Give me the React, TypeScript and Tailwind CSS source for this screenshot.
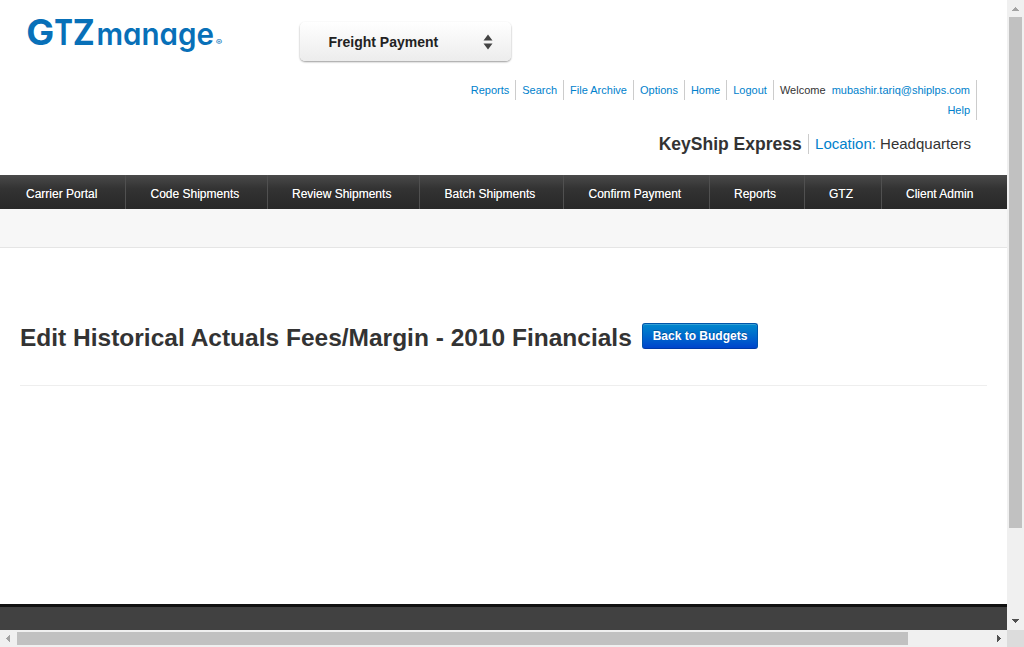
const topLinks = ['Reports', 'Search', 'File Archive', 'Options', 'Home', 'Logout'];

const navItems = [
  { label: 'Carrier Portal', width: 'w-[126px] pl-[26px]' },
  { label: 'Code Shipments', width: 'w-[142px] pl-[24.5px]' },
  { label: 'Review Shipments', width: 'w-[152px] pl-6' },
  { label: 'Batch Shipments', width: 'w-[144px] pl-[24.5px]' },
  { label: 'Confirm Payment', width: 'w-[146px] pl-[24.5px]' },
  { label: 'Reports', width: 'w-[95px] pl-6' },
  { label: 'GTZ', width: 'w-[77px] pl-6' },
  { label: 'Client Admin', width: 'w-[125px] pl-6' },
];

function Logo() {
  return (
    <svg width="200" height="60" viewBox="0 0 200 60" className="ml-[25px] shrink-0" fill="#0870b8">
      <text y="45.3" fontFamily="Inter, sans-serif" fontWeight="700" fontSize="35">
        <tspan x="1.2" textLength="28" lengthAdjust="spacingAndGlyphs">G</tspan>
        <tspan x="29.2" textLength="18.6" lengthAdjust="spacingAndGlyphs">T</tspan>
        <tspan x="47.8" textLength="22" lengthAdjust="spacingAndGlyphs">Z</tspan>
      </text>
      <text x="71.5" y="45.3" fontFamily="Inter, sans-serif" fontWeight="600" fontSize="31" textLength="117.5" lengthAdjust="spacingAndGlyphs" style={{ fontFeatureSettings: '"cv11"' }}>manage</text>
      <text x="190.7" y="45.3" fontFamily="Inter, sans-serif" fontSize="8" textLength="6.5" lengthAdjust="spacingAndGlyphs">®</text>
    </svg>
  );
}

function Header() {
  return (
    <header className="h-[175px]">
      <div className="flex h-20 items-start">
        <Logo />
        <button className="ml-[74.5px] mt-[22px] flex h-[39px] w-[211px] items-center justify-between rounded-[5px] bg-linear-to-b from-white to-[#ececec] pl-[29px] pr-[18px] text-sm font-bold text-[#222] shadow-[0_1px_2px_rgba(0,0,0,0.4)]">
          <span className="whitespace-nowrap">Freight Payment</span>
          <svg width="10" height="16" viewBox="0 0 10 16" fill="#444">
            <path d="M5 0.5L9.5 6.5H0.5Z M0.5 9.5H9.5L5 15.5Z" />
          </svg>
        </button>
      </div>
      <div className="flex items-start justify-end pr-[30px] text-[11px] leading-5 text-[#0081cc]">
        {topLinks.map((link) => (
          <a key={link} className="border-r border-[#ccc] px-1.5">{link}</a>
        ))}
        <div className="border-r border-[#ccc] px-1.5 text-right">
          <div><span className="text-[#333]">Welcome&nbsp;</span> <a>mubashir.tariq@shiplps.com</a></div>
          <a className="block">Help</a>
        </div>
      </div>
      <div className="mt-[14px] flex justify-end pr-9 leading-5 text-[#333]">
        <strong className="border-r border-[#ccc] pr-[6.4px] text-[17.5px]">KeyShip Express</strong>
        <span className="pl-1.5 text-[15px]"><a className="text-[#0081cc]">Location:</a> Headquarters</span>
      </div>
    </header>
  );
}

export default function App() {
  return (
    <div className="grid h-[647px] w-[1024px] grid-cols-[1007px_17px] grid-rows-[630px_17px] overflow-hidden bg-white font-['Liberation_Sans',Arial,sans-serif]">
      <div className="flex flex-col">
        <Header />
        <nav className="flex h-[34px] bg-[linear-gradient(#4a4a4a,#333_40%,#282828)] text-[12px] text-white [text-shadow:0_0_0.5px_rgba(255,255,255,0.6)]">
          {navItems.map((item) => (
            <a key={item.label} className={`flex items-center border-r border-[#505050] pt-1 whitespace-nowrap last:border-0 ${item.width}`}>
              {item.label}
            </a>
          ))}
        </nav>
        <div className="h-[39px] border-b border-[#e5e5e5] bg-[#f7f7f7]" />
        <main className="flex-1 px-5 pt-[70px]">
          <div className="flex h-[68px] items-start border-b border-[#eee]">
            <h1 className="w-[612px] text-[24.5px] leading-10 font-bold whitespace-nowrap text-[#333]">Edit Historical Actuals Fees/Margin - 2010 Financials</h1>
            <button className="ml-[10px] mt-[5px] h-[26px] w-[116px] rounded-[3px] border border-[#0055aa] border-b-[#0039a6] bg-linear-to-b from-[#0088cc] to-[#0044cc] text-[12px] leading-6 font-bold text-white shadow-[inset_0_1px_0_rgba(255,255,255,0.2)] [text-shadow:0_-1px_0_rgba(0,0,0,0.25)]">
              Back to Budgets
            </button>
          </div>
        </main>
        <footer className="h-[26px] border-t-[3px] border-[#111] bg-[#414141]" />
      </div>
      <div className="flex flex-col items-center bg-[#f0f0f0]">
        <svg width="17" height="17" viewBox="0 0 17 17" fill="#a3a3a3" shapeRendering="crispEdges"><path d="M8 7H9V8H10V9H11V10H12V11H5V10H6V9H7V8H8Z" /></svg>
        <div className="h-[511px] w-[13px] bg-[#c1c1c1]" />
        <svg className="mt-auto" width="17" height="17" viewBox="0 0 17 17" fill="#505050" shapeRendering="crispEdges"><path d="M5 6H12V7H11V8H10V9H9V10H8V9H7V8H6V7H5Z" /></svg>
      </div>
      <div className="flex items-center bg-[#f0f0f0]">
        <svg width="17" height="17" viewBox="0 0 17 17" fill="#a3a3a3" shapeRendering="crispEdges"><path d="M10 5V12H9V11H8V10H7V9H6V8H7V7H8V6H9V5Z" /></svg>
        <div className="h-[13px] w-[891px] bg-[#c1c1c1]" />
        <svg className="ml-auto" width="17" height="17" viewBox="0 0 17 17" fill="#505050" shapeRendering="crispEdges"><path d="M7 5H8V6H9V7H10V8H11V9H10V10H9V11H8V12H7Z" /></svg>
      </div>
      <div className="bg-[#dcdcdc]" />
    </div>
  );
}
